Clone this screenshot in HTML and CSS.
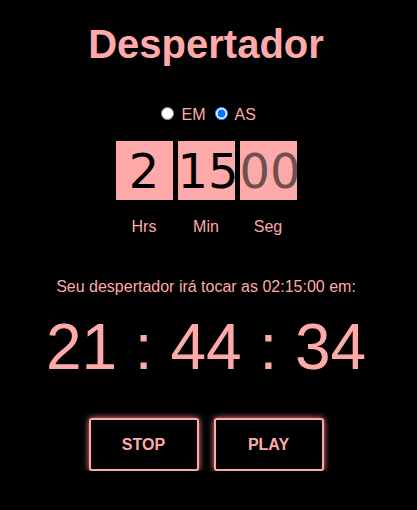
FILE: index.html
```html
<!DOCTYPE html>
<html lang="pt">
<head>
<meta charset="utf-8">
<title>Despertador</title>
<link rel="stylesheet" href="styles.css">
</head>
<body>
<main class="app">
  <h1 class="title">Despertador</h1>
  <div class="period">
    <label class="opt"><input class="radio" type="radio" name="p" value="em"> EM</label>
    <label class="opt"><input class="radio" type="radio" name="p" value="as" checked> AS</label>
  </div>
  <div class="time">
    <div class="unit">
      <input class="box" type="text" value="2">
      <span class="lbl">Hrs</span>
    </div>
    <div class="unit">
      <input class="box" type="text" value="15">
      <span class="lbl">Min</span>
    </div>
    <div class="unit">
      <input class="box" type="text" placeholder="00">
      <span class="lbl">Seg</span>
    </div>
  </div>
  <p class="msg">Seu despertador irá tocar as 02:15:00 em:</p>
  <div class="count">21 : 44 : 34</div>
  <div class="actions">
    <button class="btn" type="button">STOP</button>
    <button class="btn" type="button">PLAY</button>
  </div>
</main>
</body>
</html>
```
FILE: styles.css
```css
html, body {
  margin: 0;
  padding: 0;
  background: #000;
}
body {
  font-family: "Liberation Sans", Arial, sans-serif;
  color: #ffaaaa;
}
.app {
  width: 412px;
  display: flex;
  flex-direction: column;
  align-items: center;
}
.title {
  margin: 21px 0 0;
  font-size: 40px;
  line-height: 46px;
  font-weight: bold;
  color: #ffaaaa;
}
.period {
  margin-top: 37px;
  font-size: 16px;
  line-height: 18px;
  white-space: nowrap;
}
.opt {
  display: inline;
}
.radio {
  margin: 3px 3px 0 5px;
  width: 13px;
  height: 13px;
}
.time {
  margin-top: 17px;
  display: flex;
  gap: 5px;
}
.unit {
  display: flex;
  flex-direction: column;
  align-items: center;
  width: 57px;
}
.box {
  box-sizing: border-box;
  width: 57px;
  height: 59px;
  border: none;
  outline: none;
  padding: 0;
  margin: 0;
  background: #ffaaaa;
  color: #000;
  font-family: "DejaVu Sans", sans-serif;
  font-size: 48px;
  text-align: center;
}
.box::placeholder {
  color: #6d5050;
  opacity: 1;
}
.lbl {
  margin-top: 18px;
  font-size: 16px;
  line-height: 18px;
}
.msg {
  margin: 42px 0 0;
  font-size: 16px;
  line-height: 18px;
}
.count {
  margin-top: 14px;
  font-size: 64px;
  line-height: 74px;
}
.actions {
  margin-top: 34px;
  display: flex;
  gap: 15px;
}
.btn {
  box-sizing: border-box;
  width: 110px;
  height: 53px;
  background: #000;
  color: #ffaaaa;
  border: 2px solid #ffaaaa;
  border-radius: 3px;
  box-shadow: 0 0 6px #ff8a8a;
  font-family: "Liberation Sans", Arial, sans-serif;
  font-weight: bold;
  font-size: 16px;
  cursor: pointer;
}
```
